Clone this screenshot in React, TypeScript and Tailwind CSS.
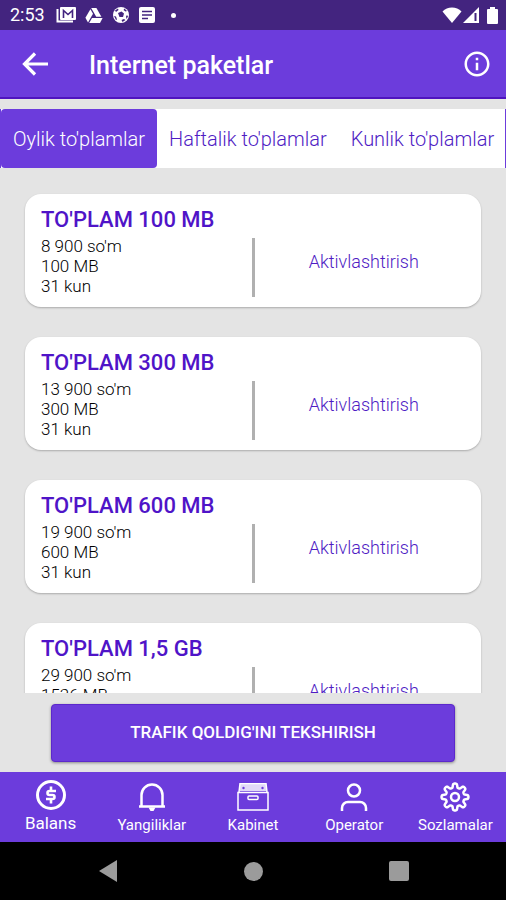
import React from 'react'
import { MdInfoOutline } from 'react-icons/md'

const tabs = ["Oylik to'plamlar", "Haftalik to'plamlar", "Kunlik to'plamlar"]

const packets = [
    { name: "TO'PLAM 100 MB", price: "8 900 so'm", size: '100 MB', period: '31 kun' },
    { name: "TO'PLAM 300 MB", price: "13 900 so'm", size: '300 MB', period: '31 kun' },
    { name: "TO'PLAM 600 MB", price: "19 900 so'm", size: '600 MB', period: '31 kun' },
    { name: "TO'PLAM 1,5 GB", price: "29 900 so'm", size: '1536 MB', period: '31 kun' },
]

function StatusBar() {
    return (
        <div className="flex h-[30px] shrink-0 items-center justify-between bg-[#43247f] pr-2 pl-2.5 text-white">
            <div className="flex items-center">
                <span className="w-[46px] text-[18px] leading-[30px]">2:53</span>
                <svg className="mr-[9px] h-4 w-5" viewBox="0 0 20 16" fill="none">
                    <path d="M1.5 2v12.5H17" stroke="white" strokeWidth="2" />
                    <rect x="4" y="0" width="16" height="13" rx="1" fill="white" />
                    <path d="M7.500 11V3.500l4.500 4 4.500-4V11" stroke="#43247f" strokeWidth="1.6" />
                </svg>
                <svg className="mr-2.5 h-[15px] w-[18px]" viewBox="0 0 18 15" fill="white">
                    <path d="M6.2 0h5.2l5 8.8h-5.2z" />
                    <path d="M5.4 1.2 8 5.8 3 14.4.4 9.8z" />
                    <path d="M7 10h10.6L15 15H4.2z" />
                </svg>
                <svg className="mr-2.5 size-4" viewBox="0 0 16 16" fill="#43247f">
                    <circle cx="8" cy="8" r="8" fill="white" />
                    <path d="M5 6l3.500-1.500 2.500 2-1 3.500H6.500z" />
                    <path d="M2 3.500 5 1.500 5.500 3 3 5zM11.500 1.500l2.500 2.500-1.500.5-2-1.500zM1 9l2 .5 1 3L3 13zM8.500 13l2.500-1 1.500 1-3 2zM14 8l1 1.500-1.500 2.500-.5-2.500z" />
                </svg>
                <svg className="size-4" viewBox="0 0 16 16">
                    <rect width="16" height="16" rx="2" fill="white" />
                    <path d="M3 4.5h10M3 8h10M3 11.5h6" stroke="#43247f" strokeWidth="1.6" />
                </svg>
                <span className="ml-4 size-[5px] rounded-full bg-white" />
            </div>
            <div className="flex items-center">
                <svg className="h-4 w-5" viewBox="0 0 20 16" fill="white">
                    <path d="M10 16 .5 4.500C3 2 6.300.5 10 .5s7 1.500 9.500 4z" />
                </svg>
                <svg className="ml-px h-4 w-4" viewBox="0 0 16 16" fill="white">
                    <path d="M16 0v16H0z" />
                    <path d="M12.500 6v8" stroke="#43247f" strokeWidth="2" />
                </svg>
                <svg className="ml-2 h-[17px] w-[11px]" viewBox="0 0 11 17" fill="white">
                    <path d="M3 0h5v2h2a1 1 0 0 1 1 1v13a1 1 0 0 1-1 1H1a1 1 0 0 1-1-1V3a1 1 0 0 1 1-1h2z" />
                </svg>
            </div>
        </div>
    )
}

function Header() {
    return (
        <header className="flex h-[69px] shrink-0 items-center border-b-2 border-[#4f14bf] bg-[#6c3cdc] pr-3.5 pl-[21px] text-white">
            <button aria-label="Orqaga" className="cursor-pointer">
                <svg className="h-6 w-7" viewBox="0 0 28 24" fill="none" stroke="white" strokeWidth="3.200">
                    <path d="M27 12H4M14 1.500 3.500 12 14 22.500" />
                </svg>
            </button>
            <h1 className="ml-10 flex-1 pt-1 text-[25px] leading-8 font-medium">Internet paketlar</h1>
            <button aria-label="Ma'lumot" className="cursor-pointer">
                <MdInfoOutline className="size-[30px]" />
            </button>
        </header>
    )
}

function Tabs() {
    return (
        <div className="mt-2.5 flex h-[59px] shrink-0 overflow-hidden border-x border-[#6c3cdc] bg-white text-xl">
            {tabs.map((tab, i) => (
                <button
                    key={tab}
                    className={
                        i === 0
                            ? 'shrink-0 cursor-pointer rounded bg-[#6c3cdc] px-3 font-light whitespace-nowrap text-white'
                            : 'shrink-0 cursor-pointer px-3 font-light whitespace-nowrap text-[#4f1cc4]'
                    }
                >
                    {tab}
                </button>
            ))}
        </div>
    )
}

function PacketCard({ packet }: { packet: (typeof packets)[number] }) {
    return (
        <article className="h-[113px] shrink-0 rounded-2xl bg-white px-4 pt-3 shadow-[0_1px_2px_rgba(0,0,0,0.25)]">
            <h2 className="text-[22px] leading-7 font-medium text-[#4f14c8]">{packet.name}</h2>
            <div className="flex">
                <div className="flex-1 pt-0.5 text-[17px] leading-5 font-light text-black">
                    <p>{packet.price}</p>
                    <p>{packet.size}</p>
                    <p>{packet.period}</p>
                </div>
                <div className="mt-1 h-[59px] w-[3px] bg-[#b0b0b0]" />
                <div className="flex flex-1 justify-center pt-3.5">
                    <button className="ml-2 h-7 cursor-pointer text-lg leading-7 font-light text-[#4f1cc4]">
                        Aktivlashtirish
                    </button>
                </div>
            </div>
        </article>
    )
}

function CoinIcon() {
    return (
        <svg className="size-[30px]" viewBox="0 0 30 30" fill="none" stroke="white">
            <circle cx="15" cy="15" r="13.500" strokeWidth="3" />
            <path d="M20 11h-6.500a2 2 0 0 0 0 4h3a2 2 0 0 1 0 4H10M15 6.500v4M15 19.500v4" strokeWidth="2.600" />
        </svg>
    )
}

function BellIcon() {
    return (
        <svg className="size-7" viewBox="0 0 28 28" fill="none" stroke="white" strokeWidth="2.500">
            <path d="M1 23.500h26M3.500 23V12a10.500 10.500 0 0 1 21 0v11" />
            <path d="M10.500 24.500h7l-2 3.500h-3z" fill="white" stroke="none" />
        </svg>
    )
}

function CabinetIcon() {
    return (
        <svg className="h-7 w-8" viewBox="0 0 32 28" fill="none" stroke="white">
            <path d="M3 0h26v8H3z" fill="white" fillOpacity="0.8" stroke="none" />
            <path d="M1 9.500h30V27H1zM2 9 3 .5h26l1 8.500" strokeWidth="1.500" />
            <rect x="11" y="13" width="10" height="3.500" rx="1" strokeWidth="1.500" />
            <circle cx="6.500" cy="5" r="1.200" fill="#6c3cdc" stroke="none" />
            <circle cx="25.500" cy="5" r="1.200" fill="#6c3cdc" stroke="none" />
        </svg>
    )
}

function PersonIcon() {
    return (
        <svg className="size-7" viewBox="0 0 28 28" fill="none" stroke="white" strokeWidth="2.500">
            <circle cx="14" cy="7.500" r="6" />
            <path d="M2 28v-3a6 6 0 0 1 6-6h12a6 6 0 0 1 6 6v3" />
        </svg>
    )
}

// eight soft teeth around the hub
const gearPoints = Array.from({ length: 180 }, (_, i) => {
    const angle = (i * Math.PI) / 90
    const radius = 11.4 + 2.1 * Math.tanh(2 * Math.cos(8 * angle))
    return `${(15 + radius * Math.cos(angle)).toFixed(2)},${(15 + radius * Math.sin(angle)).toFixed(2)}`
}).join(' ')

function GearIcon() {
    return (
        <svg className="h-7 w-[30px]" viewBox="0 1 30 28" fill="none" stroke="white" strokeWidth="2.500" overflow="visible">
            <polygon points={gearPoints} strokeLinejoin="round" />
            <circle cx="15" cy="15" r="4" />
        </svg>
    )
}

function BottomNav() {
    const link = 'flex flex-col items-center gap-0.5 pt-[11px] text-[15px] leading-6'
    return (
        <nav className="grid h-[70px] shrink-0 grid-cols-5 bg-[#6c3cdc] text-white">
            <a href="#balans" className="flex flex-col items-center gap-px pt-2 text-[17px] leading-6">
                <CoinIcon />
                Balans
            </a>
            <a href="#yangiliklar" className={link}>
                <BellIcon />
                Yangiliklar
            </a>
            <a href="#kabinet" className={link}>
                <CabinetIcon />
                Kabinet
            </a>
            <a href="#operator" className={link}>
                <PersonIcon />
                Operator
            </a>
            <a href="#sozlamalar" className={link}>
                <GearIcon />
                Sozlamalar
            </a>
        </nav>
    )
}

function SystemNav() {
    return (
        <div className="flex h-[58px] shrink-0 items-center justify-center gap-[126px] bg-black">
            <svg className="h-[22px] w-5" viewBox="0 0 20 22" fill="#9b9b9b">
                <path d="M19 0v22L1 11z" />
            </svg>
            <span className="size-[19px] rounded-full bg-[#9b9b9b]" />
            <span className="size-5 rounded-xs bg-[#9b9b9b]" />
        </div>
    )
}

function App() {
    return (
        <div className="flex h-screen flex-col bg-[#e4e4e4] font-['Roboto',sans-serif]">
            <StatusBar />
            <Header />
            <Tabs />
            <main className="flex min-h-0 flex-1 flex-col gap-[30px] overflow-y-auto px-[25px] pt-[26px] [scrollbar-width:none]">
                {packets.map((packet) => (
                    <PacketCard key={packet.name} packet={packet} />
                ))}
            </main>
            <div className="shrink-0 px-[51px] pt-[11px] pb-2.5">
                <button className="h-[58px] w-full cursor-pointer rounded border border-[#5c28cc] bg-[#6c3cdc] text-[17px] font-medium text-white shadow-[0_1px_3px_rgba(0,0,0,0.4)]">
                    TRAFIK QOLDIG'INI TEKSHIRISH
                </button>
            </div>
            <BottomNav />
            <SystemNav />
        </div>
    )
}

export default App
